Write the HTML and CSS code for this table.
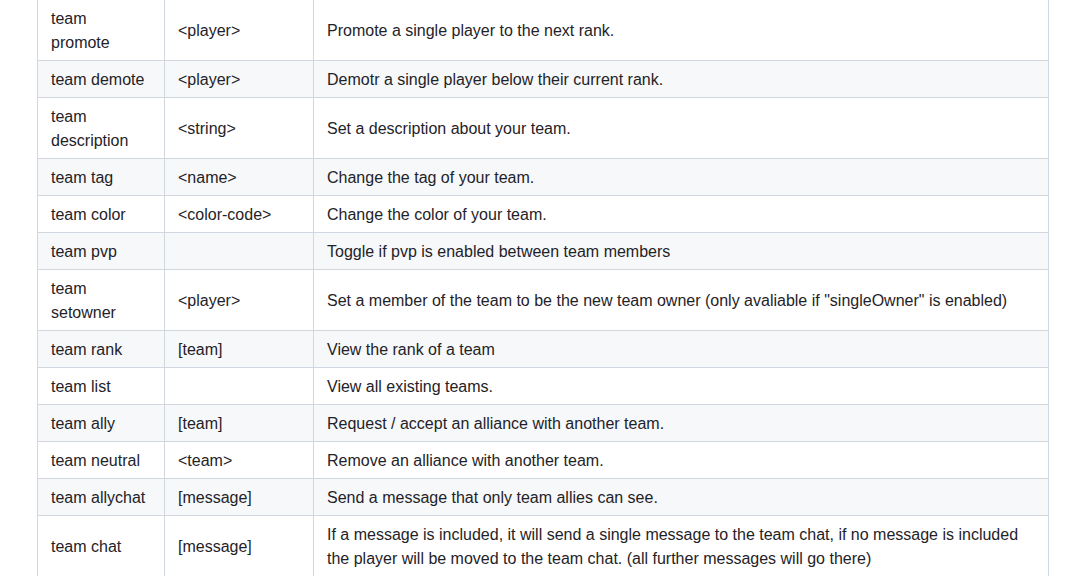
FILE: index.html
```html
<!DOCTYPE html>
<html>
<head>
<meta charset="utf-8">
<link rel="stylesheet" href="styles.css">
</head>
<body>
<div class="wrap">
<table class="cmds">
<colgroup><col class="c1"><col class="c2"><col class="c3"></colgroup>
<tbody>
<tr><td>team<br>promote</td><td>&lt;player&gt;</td><td>Promote a single player to the next rank.</td></tr>
<tr><td>team demote</td><td>&lt;player&gt;</td><td>Demotr a single player below their current rank.</td></tr>
<tr><td>team<br>description</td><td>&lt;string&gt;</td><td>Set a description about your team.</td></tr>
<tr><td>team tag</td><td>&lt;name&gt;</td><td>Change the tag of your team.</td></tr>
<tr><td>team color</td><td>&lt;color-code&gt;</td><td>Change the color of your team.</td></tr>
<tr><td>team pvp</td><td></td><td>Toggle if pvp is enabled between team members</td></tr>
<tr><td>team<br>setowner</td><td>&lt;player&gt;</td><td>Set a member of the team to be the new team owner (only avaliable if "singleOwner" is enabled)</td></tr>
<tr><td>team rank</td><td>[team]</td><td>View the rank of a team</td></tr>
<tr><td>team list</td><td></td><td>View all existing teams.</td></tr>
<tr><td>team ally</td><td>[team]</td><td>Request / accept an alliance with another team.</td></tr>
<tr><td>team neutral</td><td>&lt;team&gt;</td><td>Remove an alliance with another team.</td></tr>
<tr><td>team allychat</td><td>[message]</td><td>Send a message that only team allies can see.</td></tr>
<tr><td>team chat</td><td>[message]</td><td>If a message is included, it will send a single message to the team chat, if no message is included<br>the player will be moved to the team chat. (all further messages will go there)</td></tr>
</tbody>
</table>
</div>
</body>
</html>
```
FILE: styles.css
```css
html, body {
  margin: 0;
  padding: 0;
  background: #ffffff;
}
body {
  font-family: "Liberation Sans", Arial, sans-serif;
  font-size: 16px;
  line-height: 24px;
  color: #1f2328;
  overflow: hidden;
}
.wrap {
  padding-left: 37px;
  margin-top: -1px;
}
.cmds {
  border-collapse: collapse;
  border-spacing: 0;
  table-layout: fixed;
  width: 1011px;
}
.c1 { width: 127px; }
.c2 { width: 149px; }
.c3 { width: 735px; }
.cmds td {
  border: 1px solid #d0d7de;
  padding: 7px 13px 5px;
  white-space: nowrap;
  vertical-align: middle;
}
.cmds tr:nth-child(even) {
  background: #f6f8fa;
}
```
